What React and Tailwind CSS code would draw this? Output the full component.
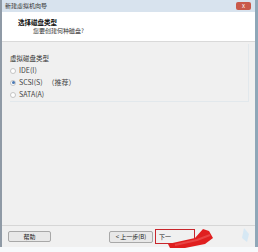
const font = { fontFamily: '"Noto Sans CJK SC", "Liberation Sans", sans-serif' };

const Radio = ({ checked, label, extra }) => (
  <div className="flex items-center h-[12px] gap-[3px]">
    <span className="w-[6px] h-[6px] rounded-full border border-[#c4c4c4] bg-white flex items-center justify-center">
      {checked && <span className="w-[3px] h-[3px] rounded-full bg-[#4a78b4]" />}
    </span>
    <span className="text-[7px] leading-none text-[#444]">{label}</span>
    {extra && <span className="text-[7px] leading-none text-[#444] ml-[2px]">{extra}</span>}
  </div>
);

export default function App() {
  return (
    <div className="w-[258px] h-[252px] bg-white relative overflow-hidden" style={font}>
      <div className="h-[247px] flex flex-col border-l-[2px] border-l-[#8f9aa6] border-r-[3px] border-r-[#8fa7b8]">
        {/* title bar */}
        <div className="h-[12px] bg-[#d8e3ee] flex items-center justify-between pl-[3px] pr-[4px]">
          <span className="text-[6px] leading-none text-[#333]">新建虚拟机向导</span>
          <span className="w-[15px] h-[8px] rounded-[2px] bg-[#c9594a] flex items-center justify-center text-white text-[6px] leading-none">x</span>
        </div>

        {/* header */}
        <div className="h-[30px] bg-white flex flex-col justify-center pl-[16px] gap-[3px] border-b border-[#d9d9d9]">
          <span className="text-[6.5px] leading-none font-bold text-[#111]">选择磁盘类型</span>
          <span className="text-[6px] leading-none text-[#333] pl-[15px]">您要创建何种磁盘?</span>
        </div>

        {/* body */}
        <div className="flex-1 bg-[#f0f0f0] flex flex-col pl-[8px] pr-[6px] pt-[2px]">
          <div className="h-[58px] border-r border-b border-[#e2e8ec] flex flex-col pt-[11px]">
            <span className="text-[6.5px] leading-none text-[#333] mb-[3px]">虚拟磁盘类型</span>
            <Radio label="IDE(I)" />
            <Radio checked label="SCSI(S)" extra="（推荐）" />
            <Radio label="SATA(A)" />
          </div>
          <div className="flex-1" />
          <div className="border-t border-[#d6d6d6] -ml-[8px] -mr-[6px] h-[22px] flex items-center pl-[6px] pr-[8px]">
            <button className="w-[43px] h-[11px] border border-[#a8a8a8] rounded-[2px] bg-[#e8e8e8] text-[6px] leading-none text-[#222]">帮助</button>
            <div className="flex-1" />
            <button className="w-[44px] h-[12px] border border-[#a8a8a8] rounded-[2px] bg-[#e8e8e8] text-[6px] leading-none text-[#222]">&lt; 上一步(B)</button>
            <div className="ml-[2px] w-[40px] h-[15px] border-[1.5px] border-[#c8252b] flex items-center pl-[3px]">
              <span className="text-[6px] leading-none text-[#222]">下一</span>
            </div>
            <div className="w-[52px]" />
          </div>
        </div>
      </div>
      <div className="h-[5px] bg-[#f7f9fb]" />

      {/* red annotation stroke */}
      <svg className="absolute left-[155px] top-[226px]" width="65" height="26" viewBox="0 0 65 26">
        <path d="M13 18 L40 12 L48 3 L54 5 L58 12 L50 18 L30 22 L15 22 Z" fill="#e01f1f" />
        <path d="M20 19 L42 14 L55 9" stroke="#f26a6a" strokeWidth="2" fill="none" opacity="0.5" />
      </svg>
      <svg className="absolute left-[238px] top-[226px]" width="14" height="20" viewBox="0 0 14 20">
        <path d="M6 2 L11 8 L9 16 L4 12 Z" fill="#cfe6f5" opacity="0.8" />
      </svg>
    </div>
  );
}
